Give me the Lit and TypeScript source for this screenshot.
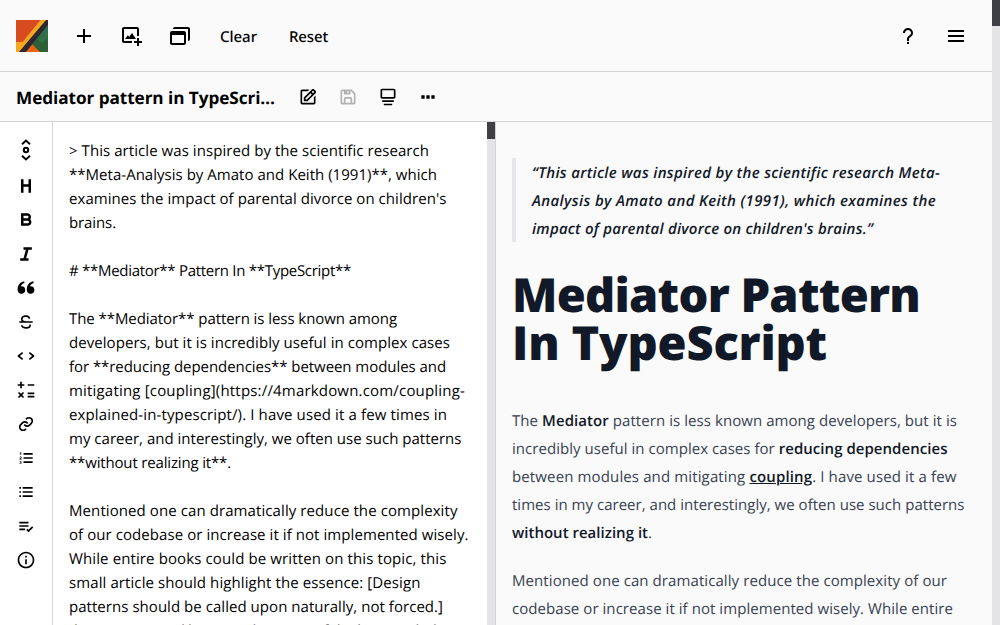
import { LitElement, html, css, svg, TemplateResult } from "lit";
import { customElement, property } from "lit/decorators.js";
import { unsafeSVG } from "lit/directives/unsafe-svg.js";

const QUOTE =
  "M6.5 10c-.223 0-.437.034-.65.065.069-.232.14-.468.254-.68.114-.308.292-.575.469-.844.148-.291.409-.488.601-.737.201-.242.475-.403.692-.604.213-.21.492-.315.714-.463.232-.133.434-.28.65-.35l.539-.222.474-.197-.485-1.938-.597.144c-.191.048-.424.104-.689.171-.271.05-.56.187-.882.312-.318.142-.686.238-1.028.466-.344.218-.741.4-1.091.692-.339.301-.748.562-1.05.945-.33.358-.656.734-.909 1.162-.293.408-.492.856-.702 1.299-.19.443-.343.896-.468 1.336-.237.882-.343 1.72-.384 2.437-.034.718-.014 1.315.028 1.747.015.204.043.402.063.539l.025.168.026-.006A4.5 4.5 0 1 0 6.5 10z";

const p = (d: string) => `<path d="${d}"/>`;

const ICONS: Record<string, string> = {
  plus: p("M19 11h-6V5h-2v6H5v2h6v6h2v-6h6z"),
  imageAdd:
    p("M4 5h13v7h2V5c0-1.103-.897-2-2-2H4c-1.103 0-2 .897-2 2v12c0 1.103.897 2 2 2h8v-2H4V5z") +
    p("m8 11-3 4h11l-4-6-3 4z") +
    p("M19 14h-2v3h-3v2h3v3h2v-3h3v-2h-3z"),
  windows:
    p("M20 3H7c-1.103 0-2 .897-2 2h15v12c1.103 0 2-.897 2-2V5c0-1.103-.897-2-2-2z") +
    p("M4 21h12c1.103 0 2-.897 2-2V9c0-1.103-.897-2-2-2H4c-1.103 0-2 .897-2 2v10c0 1.103.897 2 2 2zm0-2v-8h12v8H4z"),
  question: p(
    "M12 4C9.243 4 7 6.243 7 9h2c0-1.654 1.346-3 3-3s3 1.346 3 3c0 1.069-.454 1.465-1.481 2.255-.382.294-.813.626-1.226 1.038C10.981 13.604 10.995 14.897 11 15v2h2v-2.009c0-.024.023-.601.707-1.284.32-.32.682-.598 1.031-.867C15.798 12.024 17 11.1 17 9c0-2.757-2.243-5-5-5zm-1 14h2v2h-2z"
  ),
  menu: p("M4 6h16v2H4zm0 5h16v2H4zm0 5h16v2H4z"),
  edit:
    p("m7 17.013 4.413-.015 9.632-9.54c.378-.378.586-.88.586-1.414s-.208-1.036-.586-1.414l-1.586-1.586c-.756-.756-2.075-.752-2.825-.003L7 12.583v4.43zM18.045 4.458l1.589 1.583-1.597 1.582-1.586-1.585 1.594-1.58zM9 13.417l6.03-5.973 1.586 1.586-6.029 5.971L9 15.006v-1.589z") +
    p("M5 21h14c1.103 0 2-.897 2-2v-8.668l-2 2V19H5V5h6.847l2-2H5c-1.103 0-2 .897-2 2v14c0 1.103.897 2 2 2z"),
  save: p(
    "M5 21h14a2 2 0 0 0 2-2V8a1 1 0 0 0-.29-.71l-4-4A1 1 0 0 0 16 3H5a2 2 0 0 0-2 2v14a2 2 0 0 0 2 2zm10-2H9v-5h6zM13 7h-2V5h2zM5 5h2v4h8V5h.59L19 8.41V19h-2v-5a2 2 0 0 0-2-2H9a2 2 0 0 0-2 2v5H5z"
  ),
  dock:
    p("M19 2H5c-1.103 0-2 .897-2 2v8c0 1.103.897 2 2 2h14c1.103 0 2-.897 2-2V4c0-1.103-.897-2-2-2zM5 12V4h14v8z") +
    p("M5 16h14v2H5zM7 20h10v2H7z"),
  dots:
    `<rect x="4" y="10" width="4" height="4" rx=".6"/><rect x="10" y="10" width="4" height="4" rx=".6"/><rect x="16" y="10" width="4" height="4" rx=".6"/>`,
  heading: p("M18 20V4h-3v6H9V4H6v16h3v-7h6v7z"),
  bold: p(
    "M17.061 11.22A4.46 4.46 0 0 0 18 8.5C18 6.019 15.981 4 13.5 4H6v15h8c2.481 0 4.5-2.019 4.5-4.5a4.48 4.48 0 0 0-1.439-3.28zM13.5 7c.827 0 1.5.673 1.5 1.5s-.673 1.5-1.5 1.5H9V7h4.5zm.5 9H9v-3h5c.827 0 1.5.673 1.5 1.5S14.827 16 14 16z"
  ),
  italic: p("M19 7V4H9v3h2.868L9.012 17H5v3h10v-3h-2.868l2.856-10z"),
  quote: p(QUOTE) + `<path transform="translate(11 0)" d="${QUOTE}"/>`,
  strike: p(
    "M20 11h-8c-4 0-4-1.816-4-2.5C8 7.882 8 6 12 6c2.8 0 2.99 1.678 3 2.014L16 8h1c0-1.384-1.045-4-5-4-5.416 0-6 3.147-6 4.5 0 .728.148 1.667.736 2.5H4v2h16v-2zm-8 7c-3.793 0-3.99-1.815-4-2H6c0 .04.069 4 6 4 5.221 0 6-2.819 6-4.5 0-.146-.009-.317-.028-.5h-2.006c.032.2.034.376.034.5 0 .684 0 2.5-4 2.5z"
  ),
  code: p(
    "m7.375 16.781 1.25-1.562L4.601 12l4.024-3.219-1.25-1.562-5 4a1 1 0 0 0 0 1.562l5 4zm9.25-9.562-1.25 1.562L19.399 12l-4.024 3.219 1.25 1.562 5-4a1 1 0 0 0 0-1.562l-5-4z"
  ),
  math: p(
    "M5 10h2V7h3V5H7V2H5v3H2v2h3zM14 5h8v2h-8zM14 15h8v2h-8zM14 19h8v2h-8zM8.3 14.3 6 16.6l-2.3-2.3-1.4 1.4L4.6 18l-2.3 2.3 1.4 1.4L6 19.4l2.3 2.3 1.4-1.4L7.4 18l2.3-2.3z"
  ),
  link:
    p("M8.465 11.293c1.133-1.133 3.109-1.133 4.242 0l.707.707 1.414-1.414-.707-.707c-.943-.944-2.199-1.465-3.535-1.465s-2.592.521-3.535 1.465L4.929 12a5.008 5.008 0 0 0 0 7.071 4.983 4.983 0 0 0 3.535 1.462A4.982 4.982 0 0 0 12 19.071l.707-.707-1.414-1.414-.707.707a3.007 3.007 0 0 1-4.243 0 3.005 3.005 0 0 1 0-4.243l2.122-2.121z") +
    p("m12 4.929-.707.707 1.414 1.414.707-.707a3.007 3.007 0 0 1 4.243 0 3.005 3.005 0 0 1 0 4.243l-2.122 2.121c-1.133 1.133-3.109 1.133-4.242 0L10.586 12l-1.414 1.414.707.707c.943.944 2.199 1.465 3.535 1.465s2.592-.521 3.535-1.465L19.071 12a5.008 5.008 0 0 0 0-7.071 5.006 5.006 0 0 0-7.071 0z"),
  ol: p(
    "M5.282 12.064c-.428.328-.72.609-.875.851-.155.24-.249.498-.279.768h2.679v-.748H5.413c.081-.081.152-.151.212-.201.062-.05.182-.142.361-.27.303-.218.511-.42.626-.604.116-.186.173-.375.173-.578a.898.898 0 0 0-.151-.512.892.892 0 0 0-.412-.341c-.174-.076-.419-.111-.733-.111-.3 0-.537.038-.706.114a.889.889 0 0 0-.396.338c-.094.143-.159.346-.194.604l.894.076c.025-.188.074-.317.147-.394a.375.375 0 0 1 .279-.108c.11 0 .2.035.272.108a.344.344 0 0 1 .108.258.55.55 0 0 1-.108.297c-.074.102-.241.254-.503.453zm.055 6.386a.398.398 0 0 1-.282-.105c-.074-.07-.128-.195-.162-.378L4 18.085c.059.204.142.372.251.506.109.133.248.235.417.306.168.069.399.103.692.103.3 0 .541-.047.725-.14a1 1 0 0 0 .424-.403c.098-.175.146-.354.146-.544a.823.823 0 0 0-.088-.393.708.708 0 0 0-.249-.261 1.015 1.015 0 0 0-.286-.11.943.943 0 0 0 .345-.299.673.673 0 0 0 .113-.383.747.747 0 0 0-.281-.596c-.187-.159-.49-.238-.909-.238-.365 0-.648.072-.847.219-.2.143-.334.353-.404.626l.844.151c.023-.162.067-.274.133-.338s.151-.098.257-.098a.33.33 0 0 1 .241.089c.059.06.087.139.087.238 0 .104-.038.193-.117.27s-.177.112-.293.112a.907.907 0 0 1-.116-.011l-.045.649a1.13 1.13 0 0 1 .289-.056c.132 0 .237.041.313.126.077.082.115.199.115.352 0 .146-.04.266-.119.354a.394.394 0 0 1-.301.134zm.948-10.083V5h-.739a1.47 1.47 0 0 1-.394.523c-.168.142-.404.262-.708.365v.754a2.595 2.595 0 0 0 .937-.48v2.206h.904zM9 6h11v2H9zm0 5h11v2H9zm0 5h11v2H9z"
  ),
  ul: p("M4 6h2v2H4zm0 5h2v2H4zm0 5h2v2H4zM8 6h12v2H8zm0 5h12v2H8zm0 5h12v2H8z"),
  check: p("M4 7h11v2H4zm0 4h11v2H4zm0 4h7v2H4zm15.299-2.708-4.3 4.291-1.292-1.291-1.414 1.415 2.706 2.704 5.712-5.703z"),
  info: p(
    "M12 2C6.486 2 2 6.486 2 12s4.486 10 10 10 10-4.486 10-10S17.514 2 12 2zm0 18c-4.411 0-8-3.589-8-8s3.589-8 8-8 8 3.589 8 8-3.589 8-8 8zM11 11h2v6h-2zm0-4h2v2h-2z"
  ),
};

const icon = (name: string, cls = "i20") =>
  html`<svg class=${cls} viewBox="0 0 24 24" fill="currentColor">${svg`${unsafeSVG(ICONS[name])}`}</svg>`;

/** One line of text whose tracking is adjusted so that it spans `span` pixels. */
@customElement("text-line")
export class TextLine extends LitElement {
  static styles = css`
    :host { display: block; white-space: pre; }
    .run { display: inline-block; }
  `;
  @property({ type: Number }) span = 0;

  firstUpdated() {
    requestAnimationFrame(() => {
      const width = this.renderRoot.querySelector(".run")!.getBoundingClientRect().width;
      const count = (this.textContent ?? "").length;
      if (this.span && count) this.style.letterSpacing = `${(this.span - width) / count}px`;
    });
  }

  render() {
    return html`<span class="run"><slot></slot></span>`;
  }
}

const line = (span: number, content: string | TemplateResult) =>
  html`<text-line .span=${span}>${content}</text-line>`;

const SOURCE: [number, string][] = [
  [360, "> This article was inspired by the scientific research"],
  [368, "**Meta-Analysis by Amato and Keith (1991)**, which"],
  [377.5, "examines the impact of parental divorce on children's"],
  [47, "brains."],
  [0, " "],
  [282, "# **Mediator** Pattern In **TypeScript**"],
  [0, " "],
  [328, "The **Mediator** pattern is less known among"],
  [381, "developers, but it is incredibly useful in complex cases"],
  [377, "for **reducing dependencies** between modules and"],
  [396, "mitigating [coupling](https://4markdown.com/coupling-"],
  [378, "explained-in-typescript/). I have used it a few times in"],
  [392.5, "my career, and interestingly, we often use such patterns"],
  [162, "**without realizing it**."],
  [0, " "],
  [388.5, "Mentioned one can dramatically reduce the complexity"],
  [399.5, "of our codebase or increase it if not implemented wisely."],
  [377.5, "While entire books could be written on this topic, this"],
  [351.5, "small article should highlight the essence: [Design"],
  [374, "patterns should be called upon naturally, not forced.]"],
  [386, "the common and here we share use of the base such that"],
];

const TOOLS = ["heading", "bold", "italic", "quote", "strike", "code", "math", "link", "ol", "ul", "check", "info"];

@customElement("app-root")
export class AppRoot extends LitElement {
  static styles = css`
    :host {
      display: flex;
      width: 1000px;
      height: 625px;
      overflow: hidden;
      background: #fafafa;
      color: #000;
      font-family: "Open Sans", "Noto Sans", sans-serif;
      font-size: 15px;
      text-rendering: geometricPrecision;
    }
    svg { display: block; flex: none; }
    .i24 { width: 24px; height: 24px; }
    .i20 { width: 20px; height: 20px; }
    .page { display: flex; flex-direction: column; width: 992px; height: 625px; }
    .track { width: 8px; background: #e4e4e7; }
    .track .thumb { height: 26px; background: #3f3f46; }
    .top { display: flex; align-items: center; height: 71px; padding: 0 24px 0 16px; border-bottom: 1px solid #d4d4d8; }
    .top .i24 + .i24 { margin-left: 24px; }
    .logo { width: 32px; height: 32px; margin-right: 24px; }
    .label { padding-top: 2px; font-family: "Noto Sans", "Open Sans", sans-serif; font-weight: 500; line-height: 24px; }
    .clear { margin-left: 28px; }
    .reset { margin-left: 32px; }
    .spacer { flex: 1; }
    .bar { display: flex; align-items: center; height: 50px; padding: 0 16px; border-bottom: 1px solid #d4d4d8; box-sizing: border-box; }
    .title { width: 260px; margin: 0 22px 0 0; padding-top: 4px; font-size: 17.2px; font-weight: 700; line-height: 28px; }
    .actions { display: flex; gap: 20px; }
    .muted { color: #b1b1b3; }
    .work { display: flex; flex: 1; min-height: 0; }
    .tools { display: flex; flex-direction: column; align-items: center; gap: 14px; width: 52px; padding-top: 16px; border-right: 1px solid #d4d4d8; background: #fff; }
    .nudge { width: 16px; height: 24px; }
    .editor { display: flex; flex: none; width: 442px; height: 100%; background: #fff; border-right: 1px solid #d4d4d8; overflow: hidden; }
    .source { flex: 1; height: 100%; padding: 17px 0 0 16px; box-sizing: border-box; line-height: 24px; overflow: hidden; }
    .editor .thumb { height: 17px; background: #3f3f46; }
    .preview { flex: 1; padding: 36px 0 0 16px; line-height: 28px; color: #374151; overflow: hidden; }
    blockquote { margin: 0; height: 82px; padding: 1px 0 1px 16px; border-left: 4px solid #e5e7eb; color: #111827; font-style: italic; font-weight: 600; }
    h1 { margin: 28px 0 0; font-size: 47px; line-height: 48px; font-weight: 900; color: #111827; }
    p { margin: 0; }
    h1 + p { margin-top: 41px; }
    p + p { margin-top: 20px; }
    b { font-weight: 600; color: #111827; }
    .ref { text-decoration: underline; }
  `;

  render() {
    return html`
      <div class="page">
        <header class="top">
          <svg class="logo" viewBox="0 0 32 32">
            <rect width="32" height="32" fill="#d84a20" />
            <path d="M32 4v28H20l-6-8z" fill="#2c6138" />
            <path d="M32 6v12l-6 5-6-4z" fill="#2f7045" />
            <path d="M16 24l8 8H9z" fill="#ea6412" />
            <path d="M24.500 0H31L3 32H0V22h6.500z" fill="#f9a61f" />
            <path d="M30 0h2v4.500L18 22l-8 10H3z" fill="#2b2831" />
          </svg>
          ${icon("plus", "i24")} ${icon("imageAdd", "i24")} ${icon("windows", "i24")}
          <span class="label clear">${line(37, "Clear")}</span>
          <span class="label reset">${line(39, "Reset")}</span>
          <span class="spacer"></span>
          ${icon("question", "i24")} ${icon("menu", "i24")}
        </header>
        <div class="bar">
          <h2 class="title">${line(259, "Mediator pattern in TypeScri…")}</h2>
          <div class="actions">
            ${icon("edit")}
            <span class="muted">${icon("save")}</span>
            ${icon("dock")} ${icon("dots")}
          </div>
        </div>
        <main class="work">
          <nav class="tools">
            <svg class="nudge" viewBox="0 0 16 24" fill="none" stroke="#000" stroke-width="2">
              <path d="M4 6.2 8 2.6l4 3.6M4 17.8l4 3.6 4-3.6" />
              <circle cx="8" cy="12" r="2.2" />
            </svg>
            ${TOOLS.map((name) => icon(name))}
          </nav>
          <section class="editor">
            <div class="source">${SOURCE.map(([span, text]) => line(span, text))}</div>
            <div class="track"><div class="thumb"></div></div>
          </section>
          <article class="preview">
            <blockquote>
              ${line(408, "“This article was inspired by the scientific research Meta-")}
              ${line(404, "Analysis by Amato and Keith (1991), which examines the")}
              ${line(341, "impact of parental divorce on children's brains.”")}
            </blockquote>
            <h1>${line(408, "Mediator Pattern")}${line(315, "In TypeScript")}</h1>
            <p>
              ${line(445, html`The <b>Mediator</b> pattern is less known among developers, but it is`)}
              ${line(435.5, html`incredibly useful in complex cases for <b>reducing dependencies</b>`)}
              ${line(444.5, html`between modules and mitigating <b class="ref">coupling</b>. I have used it a few`)}
              ${line(452.5, "times in my career, and interestingly, we often use such patterns")}
              ${line(140, html`<b>without realizing it</b>.`)}
            </p>
            <p>
              ${line(435, "Mentioned one can dramatically reduce the complexity of our")}
              ${line(441, "codebase or increase it if not implemented wisely. While entire")}
            </p>
          </article>
        </main>
      </div>
      <div class="track"><div class="thumb"></div></div>
    `;
  }
}
